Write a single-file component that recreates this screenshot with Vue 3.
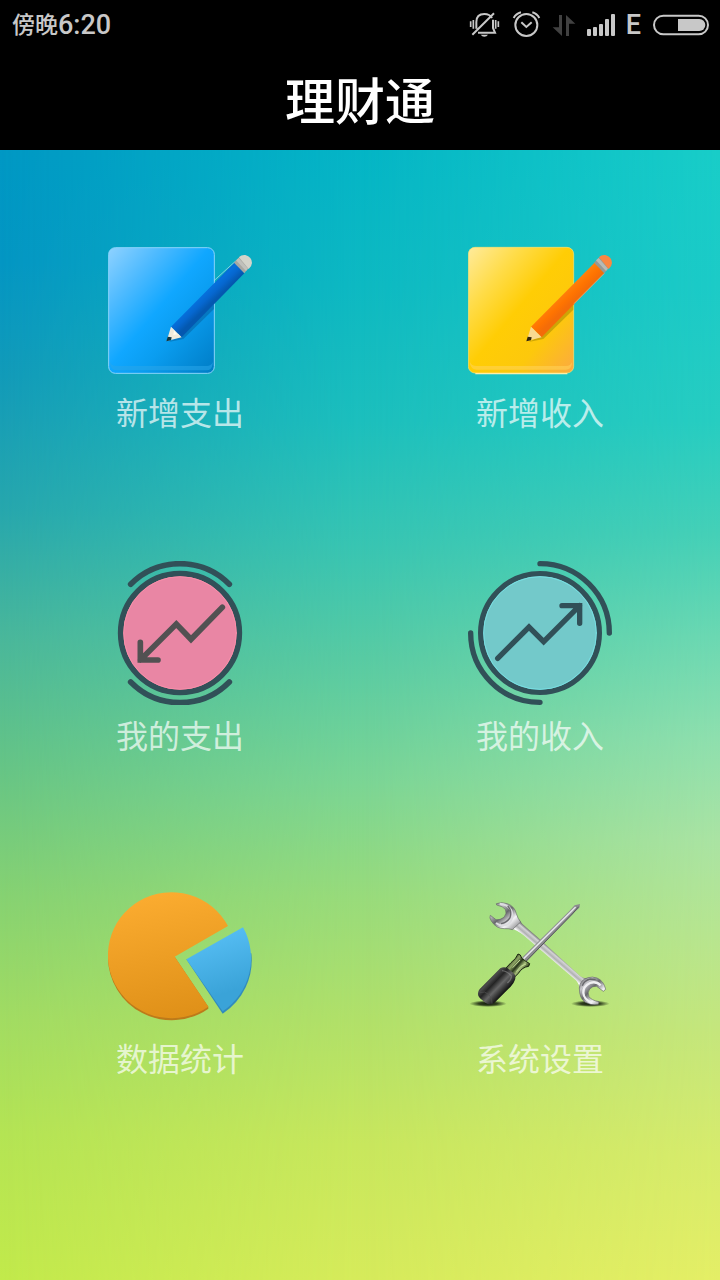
<script setup>
const entries = [
  { id: 'add-expense', label: '新增支出' },
  { id: 'add-income', label: '新增收入' },
  { id: 'my-expense', label: '我的支出' },
  { id: 'my-income', label: '我的收入' },
  { id: 'stats', label: '数据统计' },
  { id: 'settings', label: '系统设置' },
]
</script>

<template>
  <div class="app">
    <div class="status">
      <div class="clock"><span class="period">傍晚</span><span class="time">6:20</span></div>
      <div class="indicators">
        <svg width="34" height="50" viewBox="24 0 102 150" fill="none" stroke="#c8c8c8" stroke-width="6">
          <path d="M49 86V66C49 50 58 42 73 42C84 42 92 47 96 54M99 59V84L105 98H54M37 104L102 40" />
          <path d="M32 64V81M40 60V86M107 60V86M115 64V81" stroke-width="5" />
          <path d="M62 104H84Q80 110 73 110T62 104Z" fill="#c8c8c8" stroke="none" />
        </svg>
        <svg width="33" height="50" viewBox="150 0 99 150" fill="none" stroke="#c8c8c8" stroke-width="6">
          <circle cx="199" cy="75" r="33" />
          <path d="M184 67L199 81L215 67" stroke-width="6" />
          <path d="M161 54Q168 41 183 37M217 37Q231 41 238 54" />
        </svg>
        <svg width="27" height="50" viewBox="273 0 81 150" fill="#414141">
          <path d="M297 45H306V108L278 82H297ZM318 108V45L346 71H327V108Z" />
        </svg>
        <svg width="32" height="50" viewBox="378 0 96 150" fill="#c8c8c8">
          <rect x="381" y="87" width="12" height="21" rx="3" />
          <rect x="399" y="81" width="12" height="27" rx="3" />
          <rect x="417" y="72" width="12" height="36" rx="3" />
          <rect x="435" y="57" width="12" height="51" rx="3" />
          <rect x="453" y="42" width="12" height="66" rx="3" />
        </svg>
        <span class="network">E</span>
        <svg width="60" height="50" viewBox="567 0 180 150">
          <rect x="582" y="47" width="162" height="56" rx="28" fill="none" stroke="#c8c8c8" stroke-width="6" />
          <path d="M654 57H718A18 18 0 0 1 718 93H654Z" fill="#c8c8c8" />
        </svg>
      </div>
    </div>

    <header class="title-bar"><h1>理财通</h1></header>

    <main class="home">
      <button v-for="entry in entries" :key="entry.id" class="entry" type="button">
        <svg v-if="entry.id === 'add-expense'" class="icon" viewBox="54 24 432 432">
          <defs>
            <linearGradient id="bluePage" x1="0" y1="0" x2="1" y2="1">
              <stop offset="0" stop-color="#8fd2ff" />
              <stop offset=".25" stop-color="#4dbaff" />
              <stop offset=".48" stop-color="#10a7ff" />
              <stop offset=".65" stop-color="#0a9df0" />
              <stop offset="1" stop-color="#007cc4" />
            </linearGradient>
            <linearGradient id="bluePencil" gradientUnits="userSpaceOnUse" x1="325" y1="190" x2="358" y2="225">
              <stop offset="0" stop-color="#0a5fc4" />
              <stop offset=".3" stop-color="#0670dc" />
              <stop offset=".62" stop-color="#0667cf" />
              <stop offset="1" stop-color="#0458b0" />
            </linearGradient>
          </defs>
          <rect x="56" y="53" width="317" height="377" rx="20" fill="url(#bluePage)" stroke="#8ad4fb" stroke-width="3" />
          <path d="M60 396Q64 408 80 408H350Q364 408 368 396V402Q365 421 350 421H80Q64 421 60 402Z" fill="#2aa6ea" opacity=".55" />
          <path d="M236 336L280 327L372 237V222L273 318Z" fill="#045b9b" opacity=".5" />
          <path d="M243 290L435 97L463 130L275 322Z" fill="url(#bluePencil)" />
          <path d="M372 152L437 93" stroke="#bfe0ee" stroke-width="2" />
          <path d="M243 290L275 322L230 333Z" fill="#efeadb" />
          <path d="M243 290L252 302L250 315L264 312L275 322L259 310Z" fill="#fffdf0" />
          <path d="M233 320L245 322L243 331L229 334Z" fill="#103743" />
          <path d="M432 98L451 78L480 109L463 130Z" fill="#a8a8a2" />
          <path d="M438 91L446 84L474 116L468 123Z" fill="#c1c1bb" />
          <path d="M447 82Q454 74 466 75Q486 81 486 99Q486 107 476 117Z" fill="#d4d4ca" />
        </svg>

        <svg v-else-if="entry.id === 'add-income'" class="icon" viewBox="54 24 432 432">
          <defs>
            <linearGradient id="yellowPage" x1="0" y1="0" x2="1" y2="1">
              <stop offset="0" stop-color="#ffeb9c" />
              <stop offset=".25" stop-color="#ffdc48" />
              <stop offset=".48" stop-color="#ffcd05" />
              <stop offset=".72" stop-color="#fdc80c" />
              <stop offset="1" stop-color="#fba943" />
            </linearGradient>
            <linearGradient id="orangePencil" gradientUnits="userSpaceOnUse" x1="325" y1="190" x2="358" y2="225">
              <stop offset="0" stop-color="#f48a22" />
              <stop offset=".3" stop-color="#ff7d08" />
              <stop offset=".62" stop-color="#ff7400" />
              <stop offset="1" stop-color="#f46c08" />
            </linearGradient>
          </defs>
          <path d="M76 431H352" stroke="#fff2be" stroke-width="4" />
          <rect x="55" y="52" width="316" height="377" rx="20" fill="url(#yellowPage)" stroke="#ffe474" stroke-width="2" />
          <path d="M60 396Q64 408 80 408H348Q362 408 366 396V402Q363 419 348 419H80Q64 419 60 402Z" fill="#ffd45a" opacity=".55" />
          <path d="M236 336L280 327L370 239V222L273 318Z" fill="#b49205" opacity=".65" />
          <path d="M243 290L435 97L463 130L275 322Z" fill="url(#orangePencil)" />
          <path d="M372 221L463 130" stroke="#d9c29e" stroke-width="2" />
          <path d="M243 290L275 322L230 333Z" fill="#f9d991" />
          <path d="M233 320L245 322L243 331L229 334Z" fill="#342709" />
          <path d="M432 98L451 78L480 109L463 130Z" fill="#969994" />
          <path d="M438 91L446 84L474 116L468 123Z" fill="#b7bab5" />
          <path d="M447 82Q454 74 466 75Q486 81 486 99Q486 107 476 117Z" fill="#fa8742" />
        </svg>

        <svg v-else-if="entry.id === 'my-expense'" class="icon" viewBox="54 33 432 432" fill="none" stroke-width="17" stroke-linecap="round">
          <circle cx="270" cy="249" r="178" fill="#e986a4" stroke="#315058" />
          <circle cx="270" cy="249" r="169" stroke="#fb8faa" stroke-width="3" />
          <path d="M122 103A208 208 0 0 1 418 103M122 396A208 208 0 0 0 418 396" stroke="#315058" />
          <path d="M397 172L303 268L259 222L151 330M151 277V330H204" stroke="#525152" />
        </svg>

        <svg v-else-if="entry.id === 'my-income'" class="icon" viewBox="54 33 432 432" fill="none" stroke-width="16" stroke-linecap="round">
          <circle cx="270" cy="249" r="178" fill="#73c9ca" stroke="#315058" />
          <circle cx="270" cy="249" r="169" stroke="#78dfe3" stroke-width="3" />
          <path d="M270 41A208 208 0 0 1 478 249M62 249A208 208 0 0 0 270 457" stroke="#315058" />
          <path d="M143 325L237 231L281 275L389 167M336 167H389V220" stroke="#315058" />
        </svg>

        <svg v-else-if="entry.id === 'stats'" class="icon" viewBox="54 12 432 432">
          <defs>
            <linearGradient id="pieMain" x1=".4" y1="0" x2=".6" y2="1">
              <stop offset="0" stop-color="#fbac30" />
              <stop offset="1" stop-color="#df9018" />
            </linearGradient>
            <linearGradient id="pieSlice" x1=".35" y1="0" x2=".6" y2="1">
              <stop offset=".1" stop-color="#55bdf3" />
              <stop offset=".8" stop-color="#3aa3d8" />
            </linearGradient>
          </defs>
          <path d="M254 230L355 380V386A191 190 0 0 1 54 230Z" fill="#bd7a19" />
          <path d="M254 230L414 138A191 189 0 1 0 355 380Z" fill="url(#pieMain)" />
          <path d="M289 238L484 220A191 191 0 0 1 398 401Z" fill="#318bbd" />
          <path d="M289 238L459 142A191 191 0 0 1 398 394Z" fill="url(#pieSlice)" />
        </svg>

        <svg v-else class="icon" viewBox="54 12 432 432">
          <defs>
            <radialGradient id="toolShadow">
              <stop offset="0" stop-color="#10180a" />
              <stop offset=".5" stop-color="#10180a" stop-opacity=".8" />
              <stop offset="1" stop-color="#10180a" stop-opacity="0" />
            </radialGradient>
            <linearGradient id="wrenchBar" gradientUnits="userSpaceOnUse" x1="286" y1="190" x2="262" y2="218">
              <stop offset="0" stop-color="#666" />
              <stop offset=".22" stop-color="#d4d4d6" />
              <stop offset=".45" stop-color="#b0b0b2" />
              <stop offset=".72" stop-color="#fff" />
              <stop offset="1" stop-color="#77777a" />
            </linearGradient>
            <linearGradient id="wrenchHead" x1="0" y1="0" x2="1" y2="1">
              <stop offset="0" stop-color="#555" />
              <stop offset=".25" stop-color="#c6c6ca" />
              <stop offset=".45" stop-color="#68686c" />
              <stop offset=".68" stop-color="#f5f5f7" />
              <stop offset="1" stop-color="#68686a" />
            </linearGradient>
            <linearGradient id="grip" gradientUnits="userSpaceOnUse" x1="112" y1="290" x2="162" y2="338">
              <stop offset="0" stop-color="#202020" />
              <stop offset=".2" stop-color="#4b4b4b" />
              <stop offset=".4" stop-color="#242424" />
              <stop offset=".65" stop-color="#666" />
              <stop offset="1" stop-color="#151515" />
            </linearGradient>
            <linearGradient id="collar" gradientUnits="userSpaceOnUse" x1="180" y1="240" x2="222" y2="276">
              <stop offset="0" stop-color="#263014" />
              <stop offset=".28" stop-color="#8fa566" />
              <stop offset=".5" stop-color="#27341a" />
              <stop offset=".72" stop-color="#a5bd78" />
              <stop offset="1" stop-color="#223012" />
            </linearGradient>
          </defs>
          <ellipse cx="114" cy="371" rx="56" ry="10" fill="url(#toolShadow)" />
          <ellipse cx="421" cy="371" rx="58" ry="10" fill="url(#toolShadow)" />
          <path d="M181 146L206 117Q216 134 235 148L262 171L355 256L391 289Q402 297 414 295L388 325Q387 310 377 300L336 265L221 166Q200 148 181 146Z" fill="url(#wrenchBar)" />
          <path d="M139 71Q154 65 172 71Q194 79 199 101Q203 115 212 126L187 149Q177 145 164 146Q139 147 124 123Q117 113 121 106L138 119Q150 121 162 112Q172 100 166 88Q160 79 140 75Z" fill="url(#wrenchHead)" stroke="#68686b" stroke-width="2" />
          <path d="M149 71Q184 75 187 103Q190 120 173 133Q155 142 138 129" fill="none" stroke="#dcdce0" stroke-width="6" />
          <path d="M173 78Q187 91 180 113Q171 128 153 131" fill="none" stroke="#68686c" stroke-width="4" />
          <path d="M388 324Q390 299 414 293Q427 289 441 294Q461 302 467 328L460 334L440 319Q428 317 419 327Q411 338 417 350Q424 361 447 365L445 373Q423 377 406 367Q388 356 388 324Z" fill="url(#wrenchHead)" stroke="#68686c" stroke-width="2" />
          <path d="M452 316Q438 302 420 309Q399 319 400 339Q402 358 423 367" fill="none" stroke="#f0f0f2" stroke-width="7" />
          <path d="M397 317Q402 302 421 297L437 298" fill="none" stroke="#66666a" stroke-width="4" />
          <path d="M216 233L358 93L374 76L390 72L388 83L371 99L230 244Z" fill="#8b8b8f" />
          <path d="M221 236L364 94L377 81" fill="none" stroke="#e2e2e6" stroke-width="5" />
          <path d="M229 243L367 102L386 80" fill="none" stroke="#56565a" stroke-width="3" />
          <path d="M204 222L211 225Q213 236 223 241Q231 246 239 251L236 259Q217 261 205 280L194 291L166 266L183 248Q199 236 204 222Z" fill="url(#collar)" stroke="#18220e" stroke-width="3" />
          <path d="M210 240L188 263M228 252Q211 255 199 275" fill="none" stroke="#c2da96" stroke-width="3" />
          <path d="M151 265Q159 259 171 263L190 279Q199 286 195 299Q192 309 182 320L135 367Q121 379 106 368L90 355Q80 346 86 332Q89 326 96 320Z" fill="url(#grip)" />
          <path d="M90 338Q104 332 116 343Q128 354 126 371" fill="none" stroke="#505050" stroke-width="3" opacity=".7" />
          <path d="M156 272Q169 272 184 287Q186 296 172 309" fill="none" stroke="#8a8a8a" stroke-width="4" opacity=".6" />
        </svg>
        <span class="label">{{ entry.label }}</span>
      </button>
    </main>
  </div>
</template>

<style>
body {
  margin: 0;
  background: #000;
}
</style>

<style scoped>
.app {
  display: flex;
  flex-direction: column;
  min-height: 100vh;
  font-family: "Noto Sans CJK SC", sans-serif;
}

.status {
  display: flex;
  justify-content: space-between;
  align-items: center;
  height: 50px;
  padding: 0 11px 0 12px;
  background: #000;
  color: #c8c8c8;
}

.clock {
  display: flex;
  align-items: center;
}

.period {
  font-size: 23px;
  font-weight: 500;
  line-height: 46px;
  padding-bottom: 4px;
}

.time,
.network {
  font-family: Roboto, "Liberation Sans", sans-serif;
  font-size: 27px;
  font-weight: 500;
  line-height: 50px;
}

.indicators {
  display: flex;
  align-items: center;
  gap: 8px;
}

.title-bar {
  display: flex;
  justify-content: center;
  height: 100px;
  background: #000;
  color: #fff;
}

h1 {
  margin: 0;
  font-size: 50px;
  font-weight: 500;
  line-height: 96px;
}

.home {
  position: relative;
  isolation: isolate;
  flex: 1;
  display: grid;
  grid-template-columns: 1fr 1fr;
  align-content: start;
  row-gap: 127px;
  padding: 88px 0;
  background: linear-gradient(#0098c4 0%, #0496c3 10%, #129bb9 20%, #27a7ad 32%, #49b79b 43%, #64c487 54%, #86d272 66%, #a2dc62 77%, #b4e454 87%, #c2ea4b 100%);
}

.home::before,
.home::after {
  content: "";
  position: absolute;
  inset: 0;
  z-index: -1;
}

.home::before {
  background: linear-gradient(#04b5c6 0%, #0db9c2 12%, #1cbfbd 24%, #38c5b2 35%, #58cba3 45%, #7bd594 56%, #98db7b 66%, #b1e069 77%, #c8e75d 88%, #d6eb5b 100%);
  mask-image: linear-gradient(to right, transparent, #000 50%);
}

.home::after {
  background: linear-gradient(#18cdc8 0%, #1ccbc7 12%, #27cdc1 24%, #45d0b7 34%, #6bd8b2 43%, #8edfae 52%, #aae3a3 61%, #b7e591 69%, #c5e67c 78%, #d7eb6c 89%, #e4ee66 100%);
  mask-image: linear-gradient(to right, transparent 50%, #000);
}

.entry {
  display: flex;
  flex-direction: column;
  align-items: center;
  gap: 6px;
  justify-self: center;
  padding: 0;
  border: 0;
  background: none;
  font-family: inherit;
  cursor: pointer;
}

.icon {
  display: block;
  width: 144px;
  height: 144px;
}

.label {
  color: rgba(255, 255, 255, 0.7);
  font-size: 32px;
  line-height: 46px;
}
</style>
